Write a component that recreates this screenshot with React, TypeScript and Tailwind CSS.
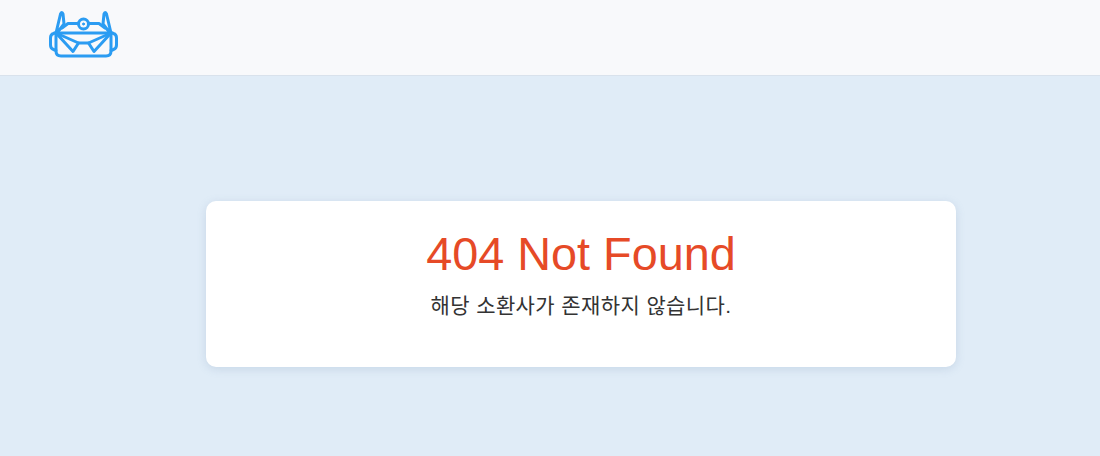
const Logo = () => (
  <svg width="70" height="50" viewBox="48 9 70 50" fill="none" stroke="#2b9cf2" strokeWidth="3" strokeLinecap="round" strokeLinejoin="round">
    {/* horns */}
    <path d="M56 33 L60.500 14 Q62 11 63 14 L64 24 L57 33" />
    <path d="M111 33 L106.500 14 Q105 11 104 14 L103 24 L110 33" />
    {/* roof and eye */}
    <path d="M62 28 L68 23.500 L78 23.500 M89 23.500 L99 23.500 L105 28" />
    <circle cx="83.500" cy="24" r="5" />
    <circle cx="83.500" cy="24" r="1" fill="#2b9cf2" strokeWidth="1" />
    <path d="M56 33 L111 33" />
    {/* ears */}
    <path d="M56 32.500 L53.500 33.500 Q50.500 34.500 50.500 38 L50.500 45 Q50.500 48.500 53.500 49.500 L56 50.500" />
    <path d="M111 32.500 L113.500 33.500 Q116.500 34.500 116.500 38 L116.500 45 Q116.500 48.500 113.500 49.500 L111 50.500" />
    {/* body */}
    <path d="M56 33 L56 51 Q56 56 61 56 L106 56 Q111 56 111 51 L111 33" />
    {/* folds */}
    <path d="M56 33 L73 51.500 L78.500 43 L88.500 43 L94 51.500 L111 33" />
    <path d="M56 33 L78.500 43 M111 33 L88.500 43" />
  </svg>
);

export default function App() {
  return (
    <div className="flex h-[456px] flex-col bg-[#e0ecf7] font-['Liberation_Sans','Noto_Sans_CJK_KR',sans-serif]">
      <header className="flex h-[76px] shrink-0 items-start border-b border-[#d9e2ec] bg-[#f8f9fb] pl-[48px] pt-[9px]">
        <Logo />
      </header>
      <main className="flex flex-1 items-start justify-center pl-[62px] pt-[125px]">
        <div className="flex h-[166px] w-[750px] flex-col items-center rounded-[10px] bg-white pt-[25px] shadow-[0_2px_10px_rgba(100,130,170,0.2)]">
          <h1 className="text-[46.800px] leading-[56px] text-[#e64a27]">404 Not Found</h1>
          <p className="mt-[10px] text-[21px] leading-[28px] tracking-[0.4px] text-[#333333]">해당 소환사가 존재하지 않습니다.</p>
        </div>
      </main>
    </div>
  );
}
